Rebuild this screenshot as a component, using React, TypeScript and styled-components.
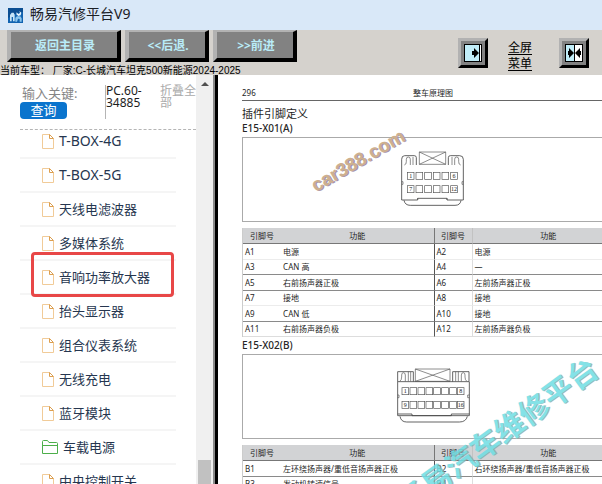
import React from "react";
import styled, { createGlobalStyle, css } from "styled-components";

const sans = `"Noto Sans", "Noto Sans CJK SC", sans-serif`;
const arial = `"Liberation Sans", "Noto Sans CJK SC", sans-serif`;
const cjk = `"Noto Sans CJK SC", sans-serif`;

const GlobalStyle = createGlobalStyle`
  * { box-sizing: border-box; }
  body { margin: 0; background: #fff; font-family: ${sans}; }
  button, textarea { font: inherit; }
`;

const Window = styled.div`
  display: flex;
  flex-direction: column;
  height: 100vh;
  overflow: hidden;
`;

const TitleBar = styled.header`
  display: flex;
  align-items: center;
  flex: none;
  gap: 7px;
  height: 30px;
  padding: 0 8px;
  background: #d9e8f8;
  color: #1c2026;
  font-size: 14px;
  line-height: 20px;
`;

const TitleText = styled.span`
  margin-top: -3px;
`;

const Toolbar = styled.div`
  display: flex;
  justify-content: space-between;
  flex: none;
  height: 45px;
  padding-right: 13px;
  overflow: hidden;
  background: #d5d2cd;
`;

const ToolbarMain = styled.div`
  display: flex;
  flex-direction: column;
`;

const ButtonRow = styled.div`
  display: flex;
  gap: 4px;
  height: 32px;
  padding-left: 7px;
`;

const bevel = css`
  border-style: solid;
  border-color: #b2b2b2 #000 #000 #b2b2b2;
  background: #828282;
`;

const NavButton = styled.button<{ $wide?: boolean }>`
  ${bevel}
  width: ${(p) => (p.$wide ? 114 : 84)}px;
  padding: 2px 0 0 2px;
  border-width: 2px 4px 4px 4px;
  color: #b9ecf8;
  font-family: ${sans};
  font-size: 12px;
  font-weight: 700;
  line-height: 24px;
  white-space: nowrap;
`;

const CurrentModel = styled.div`
  margin-top: 2px;
  color: #000;
  font-family: ${arial};
  font-size: 10px;
  line-height: 14px;
  white-space: pre;
`;

const ToolbarSide = styled.div`
  display: flex;
  align-items: flex-start;
  padding-top: 8px;
`;

const IconButton = styled.button`
  ${bevel}
  display: flex;
  align-items: center;
  justify-content: center;
  width: 30px;
  height: 30px;
  padding: 0;
  border-width: 3px;
`;

const MenuLinks = styled.nav`
  display: flex;
  flex-direction: column;
  padding: 1px 27px 0 20px;
`;

const MenuLink = styled.a`
  color: #000;
  font-family: ${cjk};
  font-size: 12px;
  line-height: 16px;
  text-underline-offset: 2px;
`;

const Content = styled.div`
  display: flex;
  flex: 1;
  min-height: 0;
`;

const Sidebar = styled.aside`
  display: flex;
  flex: none;
  width: 218px;
  border-right: 3px solid #000;
  box-shadow: inset -2px 0 #8b8b8b;
`;

const SidebarMain = styled.div`
  display: flex;
  flex-direction: column;
  flex: 1;
  min-width: 0;
  padding-left: 20px;
`;

const Search = styled.form`
  display: flex;
  flex: none;
  height: 55px;
  padding-top: 10px;
  border-bottom: 1px dashed #b5b5b5;
`;

const SearchLabelColumn = styled.div`
  display: flex;
  flex-direction: column;
  align-items: flex-start;
  width: 85px;
`;

const SearchLabel = styled.label`
  padding-left: 2px;
  color: #858585;
  font-size: 13px;
  line-height: 17px;
`;

const SearchButton = styled.button`
  width: 47px;
  height: 17px;
  padding: 0;
  border: 0;
  border-radius: 4px;
  background: #0a74cd;
  color: #fff;
  font-size: 13px;
  line-height: 17px;
`;

const SearchField = styled.textarea`
  width: 46px;
  height: 34px;
  padding: 0;
  border: 0;
  border-left: 1px solid #b5b5b5;
  outline: 0;
  resize: none;
  overflow: hidden;
  background: transparent;
  color: #1d1d1d;
  font-size: 12px;
  line-height: 12px;
`;

const CollapseLink = styled.a`
  flex: none;
  width: 36px;
  margin-left: 9px;
  color: #aaa;
  font-size: 12px;
  line-height: 12px;
  text-decoration: none;
`;

const TreeView = styled.div`
  flex: 1;
  min-height: 0;
  overflow: hidden;
`;

const Tree = styled.ul`
  margin: -5px 20px 0 0;
  padding: 0;
  list-style: none;
`;

const TreeItem = styled.li`
  position: relative;
  display: flex;
  align-items: center;
  gap: 5px;
  height: 34px;
  padding-left: 22px;
  border-bottom: 2px solid #f5f5f5;
`;

const TreeLink = styled.a<{ $latin?: boolean }>`
  color: #26364f;
  font-size: ${(p) => (p.$latin ? 14 : 13)}px;
  line-height: 18px;
  text-decoration: none;
  white-space: nowrap;
`;

const Highlight = styled.span`
  position: absolute;
  inset: -9px 2px -4px 11px;
  border: 3px solid #e84747;
  border-radius: 4px;
  pointer-events: none;
`;

const Scrollbar = styled.div`
  display: flex;
  flex-direction: column;
  justify-content: space-between;
  align-items: center;
  width: 17px;
  margin-right: 2px;
  padding-top: 7px;
  background: #f0f0f0;
`;

const ScrollThumb = styled.div`
  width: 13px;
  height: 24px;
  background: #c1c1c1;
`;

const Viewer = styled.main`
  position: relative;
  flex: 1;
  min-width: 0;
  overflow: hidden;
  padding: 10px 0 0 24px;
`;

const Page = styled.article`
  width: 100%;
  min-width: 382px;
  color: #262626;
  font-size: 8px;
`;

const PageHeader = styled.div`
  display: grid;
  grid-template-columns: 1fr auto 1fr;
  align-items: center;
  height: 16px;
  border-bottom: 1px solid #666;
`;

const PageTitle = styled.h1`
  margin: 5px 0 0;
  font-family: ${cjk};
  font-size: 11px;
  font-weight: 400;
  line-height: 15px;
`;

const ConnectorTitle = styled.h2`
  margin: 0;
  font-size: 10px;
  font-weight: 500;
  line-height: 14px;
`;

const Figure = styled.figure`
  display: flex;
  justify-content: center;
  align-items: flex-start;
  height: 85px;
  margin: 2px 0 6px;
  padding-top: 12px;
  border: 1px solid #aaa;
`;

const PinTable = styled.table`
  width: 100%;
  margin-bottom: 1px;
  border-collapse: separate;
  border-spacing: 0;
  table-layout: fixed;
  border-left: 1px solid #ccc;
`;

const PinCol = styled.col`
  width: 10%;
`;

const HeadCell = styled.th`
  height: 16px;
  padding: 0;
  border-bottom: 1px solid #777;
  background: #d2d3d5;
  font-weight: 400;
  line-height: 12px;

  &:nth-child(3) {
    border-left: 1px solid #777;
  }
  &:nth-child(4) {
    border-left: 1px solid #c2c2c2;
  }
`;

const Row = styled.tr<{ $faint?: boolean }>`
  height: 16px;

  &:nth-child(even) {
    height: 15px;
  }
  td {
    border-bottom: 1px solid ${(p) => (p.$faint ? "#ececec" : "#8a8a8a")};
  }
  &:last-child td {
    border-bottom-color: #ddd;
  }
`;

const Cell = styled.td`
  padding: 0 2px;
  line-height: 12px;
  white-space: nowrap;

  &:nth-child(3) {
    border-left: 1px solid #555;
  }
  &:nth-child(4) {
    border-left: 1px solid #ddd;
  }
`;

const Watermark = styled.div<{ $site?: boolean }>`
  position: absolute;
  white-space: nowrap;
  pointer-events: none;
  transform: translate(-50%, -50%) rotate(${(p) => (p.$site ? -30 : -36)}deg);
  ${(p) =>
    p.$site
      ? css`
          left: 140px;
          top: 86px;
          color: #cdb08f;
          font: 700 19px/24px ${arial};
          text-shadow: 1px 1px #a593ad;
        `
      : css`
          left: 278px;
          top: 359px;
          color: #6fdde3;
          font: 700 30px/36px ${cjk};
          text-shadow: 1px 1px #8fa9ab;
          opacity: 0.85;
        `}
`;

function AppLogo() {
  return (
    <svg width="15" height="15" viewBox="0 0 45 45" aria-hidden="true">
      <rect width="45" height="45" fill="#1163b0" />
      <path d="M0 0H45V12L20 18 0 30Z" fill="#0b4e92" />
      <path d="M6 40V21L11 14H17L20 20V40H15V27H11V40Z" fill="#c7e4f7" />
      <path d="M22 41V29L27 25H37L41 31V41H35V33L30 32 27 41Z" fill="#8cc6ee" />
      <path d="M26 13 31 18 36 15 34 9 40 14 38 22 31 24 25 19Z" fill="#e7f5ff" />
    </svg>
  );
}

function PanelIcon() {
  return (
    <svg width="18" height="18" viewBox="0 0 18 18" aria-hidden="true">
      <rect x="0.5" y="0.5" width="17" height="17" fill="#c1edf8" stroke="#000" />
      <rect x="15" y="1" width="2" height="16" fill="#fff" />
      <path d="M15.500 1V17" stroke="#000" />
      <path d="M8 7H10V4L15 9 10 14V11H8Z" fill="#000" />
    </svg>
  );
}

function SplitIcon() {
  return (
    <svg width="18" height="18" viewBox="0 0 18 18" aria-hidden="true">
      <rect x="0.5" y="0.5" width="17" height="17" fill="#fff" stroke="#000" />
      <rect x="1" y="1" width="8" height="16" fill="#c1edf8" />
      <path d="M9.500 1V17" stroke="#000" />
      <path d="M3 7H4V4L9 9 4 14V11H3Z M16 7H15V4L10 9 15 14V11H16Z" fill="#000" />
    </svg>
  );
}

function FileIcon() {
  return (
    <svg width="12" height="15" viewBox="0 0 12 15" fill="none" aria-hidden="true">
      <path d="M7.500 0.500H0.500V14.500H11.500V5" stroke="#f1cb98" />
      <path d="M7.500 0.500V4.500H11.500L7.500 0.500" stroke="#dc9f50" />
    </svg>
  );
}

function FolderIcon() {
  return (
    <svg width="16" height="14" viewBox="0 0 16 14" fill="none" stroke="#4daf4a" aria-hidden="true">
      <path d="M0.500 13.500V1.500Q0.500 0.500 1.500 0.500H5.500L7 2.500H14.500Q15.500 2.500 15.500 3.500V13.500Z M0.500 5.500H15.500" />
    </svg>
  );
}

type ConnectorProps = {
  viewBox: string;
  width: number;
  outline: string;
  inner: string;
  cells: number[];
  cellWidth: number;
  rows: number[];
  labels: [string, string][];
};

function Connector({ viewBox, width, outline, inner, cells, cellWidth, rows, labels }: ConnectorProps) {
  return (
    <svg width={width} height="57" viewBox={viewBox} fill="none" stroke="#555" strokeWidth="2" aria-hidden="true">
      <path d={outline} stroke="#444" strokeWidth="2.5" />
      <path d={inner} />
      {rows.map((y, r) => (
        <g key={y}>
          {cells.map((x) => (
            <rect key={x} x={x} y={y} width={cellWidth} height="21" />
          ))}
          {[cells[0], cells[cells.length - 1]].map((x, i) => (
            <text
              key={x}
              x={x + cellWidth / 2}
              y={y + 17}
              textAnchor="middle"
              fontFamily="Liberation Serif, serif"
              fontSize="18"
              fill="#222"
              stroke="none"
            >
              {labels[r][i]}
            </text>
          ))}
        </g>
      ))}
    </svg>
  );
}

const connectorA: ConnectorProps = {
  viewBox: "33 60 198 171",
  width: 66,
  outline:
    "M47 77Q38 77 38 88V210H86V205H174V210H223V88Q223 77 212 77 M45 211Q48 226 64 226H198Q214 226 216 211 M82 105V83Q82 77 76 77H47 M178 105V83Q178 77 184 77H212",
  inner:
    "M91 66H170V103H91Z M91 66 170 103 M91 103 170 66 M46 105Q52 104 52 95V88Q52 81 58 81Q64 81 64 88V105 M72 105V81 M215 105Q209 104 209 95V88Q209 81 203 81Q197 81 197 88V105 M189 105V81 M38 155H42V163H38 M223 155H219V163H223 M86 204V210 M174 204V210",
  cells: [55, 81, 107, 133, 159, 185],
  cellWidth: 20,
  rows: [127, 167],
  labels: [
    ["1", "6"],
    ["7", "12"],
  ],
};

const connectorB: ConnectorProps = {
  viewBox: "50 50 225 171",
  width: 75,
  outline:
    "M55 94V64H102V94 M220 94V64H269V94 M55 94H269 M55 94V196H270V94 M62 198Q65 215 82 215H240Q260 215 264 198 M55 191H98V196H216V191H270",
  inner:
    "M108 56H212V93H108Z M108 56 212 93 M108 93 212 56 M61 93Q67 90 67 80V74Q67 67 72 67Q78 67 78 74V93 M87 93V64 M94 93V64 M263 93Q257 90 257 80V74Q257 67 252 67Q246 67 246 74V93 M237 93V64 M229 93V64 M55 134H59V142H55 M270 134H265V142H270",
  cells: [68, 92, 116, 140, 163, 187, 211, 234],
  cellWidth: 20,
  rows: [112, 153],
  labels: [
    ["1", "8"],
    ["9", "16"],
  ],
};

type Pins = { rows: string[][]; faint?: number[] };

function Pinout({ rows, faint = [] }: Pins) {
  return (
    <PinTable>
      <colgroup>
        <PinCol />
        <col />
        <PinCol />
        <col />
      </colgroup>
      <thead>
        <tr>
          <HeadCell scope="col">引脚号</HeadCell>
          <HeadCell scope="col">功能</HeadCell>
          <HeadCell scope="col">引脚号</HeadCell>
          <HeadCell scope="col">功能</HeadCell>
        </tr>
      </thead>
      <tbody>
        {rows.map((row, i) => (
          <Row key={row[0]} $faint={faint.includes(i)}>
            {row.map((value, c) => (
              <Cell key={c}>{value}</Cell>
            ))}
          </Row>
        ))}
      </tbody>
    </PinTable>
  );
}

const pinsA = [
  ["A1", "电源", "A2", "电源"],
  ["A3", "CAN 高", "A4", "—"],
  ["A5", "右前扬声器正极", "A6", "左前扬声器正极"],
  ["A7", "接地", "A8", "接地"],
  ["A9", "CAN 低", "A10", "接地"],
  ["A11", "右前扬声器负极", "A12", "左前扬声器负极"],
];

const pinsB = [
  ["B1", "左环绕扬声器/重低音扬声器正极", "B2", "右环绕扬声器/重低音扬声器正极"],
  ["B3", "发动机转速信号", "B4", ""],
];

const treeItems: { name: string; folder?: boolean; marked?: boolean; latin?: boolean }[] = [
  { name: "T-BOX-4G", latin: true },
  { name: "T-BOX-5G", latin: true },
  { name: "天线电滤波器" },
  { name: "多媒体系统" },
  { name: "音响功率放大器", marked: true },
  { name: "抬头显示器" },
  { name: "组合仪表系统" },
  { name: "无线充电" },
  { name: "蓝牙模块" },
  { name: "车载电源", folder: true },
  { name: "中央控制开关" },
];

export default function App() {
  return (
    <Window>
      <GlobalStyle />
      <TitleBar>
        <AppLogo />
        <TitleText>畅易汽修平台V9</TitleText>
      </TitleBar>
      <Toolbar>
        <ToolbarMain>
          <ButtonRow>
            <NavButton type="button" $wide>返回主目录</NavButton>
            <NavButton type="button">&lt;&lt;后退.</NavButton>
            <NavButton type="button">&gt;&gt;前进</NavButton>
          </ButtonRow>
          <CurrentModel>当前车型： 厂家:C-长城汽车坦克500新能源2024-2025</CurrentModel>
        </ToolbarMain>
        <ToolbarSide>
          <IconButton type="button" aria-label="收起面板">
            <PanelIcon />
          </IconButton>
          <MenuLinks>
            <MenuLink href="#fullscreen">全屏</MenuLink>
            <MenuLink href="#menu">菜单</MenuLink>
          </MenuLinks>
          <IconButton type="button" aria-label="分栏">
            <SplitIcon />
          </IconButton>
        </ToolbarSide>
      </Toolbar>
      <Content>
        <Sidebar>
          <SidebarMain>
            <Search onSubmit={(e) => e.preventDefault()}>
              <SearchLabelColumn>
                <SearchLabel htmlFor="keyword">输入关键:</SearchLabel>
                <SearchButton type="submit">查询</SearchButton>
              </SearchLabelColumn>
              <SearchField id="keyword" defaultValue="PC.60-34885" spellCheck={false} />
              <CollapseLink href="#collapse">折叠全部</CollapseLink>
            </Search>
            <TreeView>
              <Tree>
                {treeItems.map((item) => (
                  <TreeItem key={item.name}>
                    {item.folder ? <FolderIcon /> : <FileIcon />}
                    <TreeLink href="#item" $latin={item.latin}>{item.name}</TreeLink>
                    {item.marked && <Highlight />}
                  </TreeItem>
                ))}
              </Tree>
            </TreeView>
          </SidebarMain>
          <Scrollbar aria-hidden="true">
            <svg width="8" height="4" viewBox="0 0 8 4">
              <path d="M0 4 4 0 8 4Z" fill="#505050" />
            </svg>
            <ScrollThumb />
          </Scrollbar>
        </Sidebar>
        <Viewer>
          <Page>
            <PageHeader>
              <span>296</span>
              <span>整车原理图</span>
            </PageHeader>
            <PageTitle>插件引脚定义</PageTitle>
            <ConnectorTitle>E15-X01(A)</ConnectorTitle>
            <Figure>
              <Connector {...connectorA} />
            </Figure>
            <Pinout rows={pinsA} faint={[0, 3]} />
            <ConnectorTitle>E15-X02(B)</ConnectorTitle>
            <Figure>
              <Connector {...connectorB} />
            </Figure>
            <Pinout rows={pinsB} />
          </Page>
          <Watermark $site>car388.com</Watermark>
          <Watermark>畅易汽车维修平台</Watermark>
        </Viewer>
      </Content>
    </Window>
  );
}
